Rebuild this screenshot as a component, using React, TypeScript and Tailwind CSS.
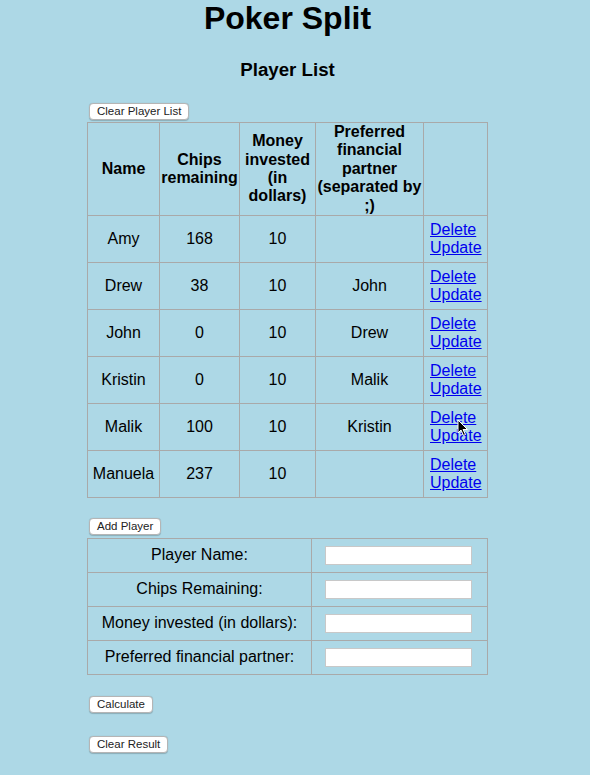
import React from "react";

const players = [
  { name: "Amy", chips: 168, money: 10, partner: "" },
  { name: "Drew", chips: 38, money: 10, partner: "John" },
  { name: "John", chips: 0, money: 10, partner: "Drew" },
  { name: "Kristin", chips: 0, money: 10, partner: "Malik" },
  { name: "Malik", chips: 100, money: 10, partner: "Kristin" },
  { name: "Manuela", chips: 237, money: 10, partner: "" },
];

const fields = [
  "Player Name:",
  "Chips Remaining:",
  "Money invested (in dollars):",
  "Preferred financial partner:",
];

function Btn({ children }: { children: React.ReactNode }) {
  return (
    <button className="h-[17px] rounded-[4px] border border-[#b5b5b5] bg-white px-[7px] text-[11.5px] leading-[15px] text-[#222] shadow-[0_0.5px_1px_rgba(0,0,0,0.2)]">
      {children}
    </button>
  );
}

const cell = "border border-[#a9a9a9] p-0";

export default function App() {
  return (
    <div className="relative min-h-screen bg-[#add8e6] font-['Liberation_Sans',Arial,sans-serif] text-black">
      <div className="w-[575px]">
        <h1 className="text-center text-[32px] font-bold leading-[37px]">Poker Split</h1>
        <h3 className="mt-[22px] text-center text-[18.7px] font-bold leading-[22px]">Player List</h3>

        <div className="ml-[87px] w-[400px]">
          <div className="mt-[22px] flex pl-[2px]">
            <Btn>Clear Player List</Btn>
          </div>
          <table className="mt-[2px] w-[400px] table-fixed border-collapse text-[16px] leading-[18.4px]">
            <colgroup>
              <col className="w-[72px]" />
              <col className="w-[80px]" />
              <col className="w-[76px]" />
              <col className="w-[108px]" />
              <col className="w-[64px]" />
            </colgroup>
            <thead>
              <tr className="h-[93px] font-bold">
                <th className={cell}>Name</th>
                <th className={cell}>Chips remaining</th>
                <th className={cell}>Money invested (in dollars)</th>
                <th className={cell}>Preferred financial partner (separated by ;)</th>
                <th className={cell}></th>
              </tr>
            </thead>
            <tbody>
              {players.map((p) => (
                <tr key={p.name} className="h-[47px] text-center">
                  <td className={cell}>{p.name}</td>
                  <td className={cell}>{p.chips}</td>
                  <td className={cell}>{p.money}</td>
                  <td className={cell}>{p.partner}</td>
                  <td className={`${cell} pl-[6px] text-left`}>
                    <a href="#" className="block text-[#0000ee] underline">Delete</a>
                    <a href="#" className="block text-[#0000ee] underline">Update</a>
                  </td>
                </tr>
              ))}
            </tbody>
          </table>

          <div className="mt-[20px] flex pl-[2px]">
            <Btn>Add Player</Btn>
          </div>
          <table className="mt-[3px] w-[400px] table-fixed border-collapse text-[16px] leading-[18.4px]">
            <colgroup>
              <col className="w-[224px]" />
              <col className="w-[176px]" />
            </colgroup>
            <tbody>
              {fields.map((f) => (
                <tr key={f} className="h-[34px]">
                  <td className={`${cell} text-center`}>{f}</td>
                  <td className={`${cell} pl-[13px]`}>
                    <input
                      type="text"
                      className="block h-[19px] w-[147px] border border-[#c8c8c8] bg-white outline-none"
                    />
                  </td>
                </tr>
              ))}
            </tbody>
          </table>

          <div className="mt-[21px] flex pl-[2px]">
            <Btn>Calculate</Btn>
          </div>
          <div className="mt-[23px] flex pl-[2px]">
            <Btn>Clear Result</Btn>
          </div>
        </div>
      </div>

      {/* mouse pointer captured in the screenshot */}
      <svg
        className="pointer-events-none absolute left-[457px] top-[419px]"
        width="12"
        height="18"
        viewBox="0 0 12 18"
      >
        <path
          d="M1 1 L1 14 L4 11 L6.5 16.5 L8.5 15.5 L6 10.5 L10.5 10.5 Z"
          fill="#000"
          stroke="#fff"
          strokeWidth="1"
        />
      </svg>
    </div>
  );
}
